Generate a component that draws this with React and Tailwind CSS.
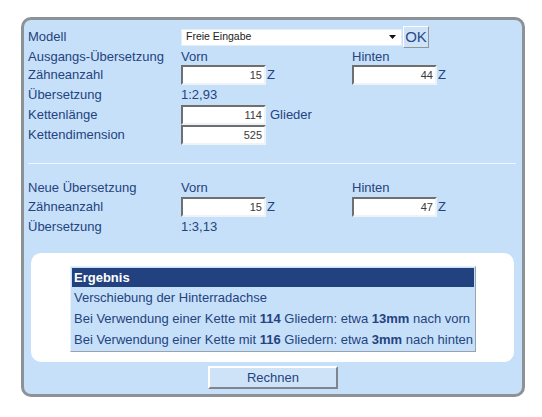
import { useState } from 'react'

function Field({ value, width = 'w-[85px]' }) {
  return (
    <div className={`${width} h-[20px] bg-white border-2 border-t-[#6f6f6f] border-l-[#6f6f6f] border-b-[#eef3f8] border-r-[#eef3f8] flex items-center justify-end pr-[2px] text-[11px] text-[#3a3a3a]`}>
      {value}
    </div>
  )
}

export default function App() {
  const [modell] = useState('Freie Eingabe')
  const txt = 'text-[13px] text-[#24437f]'

  return (
    <div className="w-[542px] h-[417px] bg-white pt-[17px] pl-[21px]" style={{ fontFamily: '"Liberation Sans", Arial, sans-serif' }}>
      <div className="w-[504px] h-[380px] rounded-[10px] border-[3px] border-[#8d9297] bg-[#c7e0f9] pl-[4px] pr-[4px] pt-[6px] flex flex-col">
        <div className={`grid grid-cols-[153px_171px_1fr] ${txt}`}>
          <div className="h-[22px] flex items-center">Modell</div>
          <div className="col-span-2 h-[22px] flex items-center">
            <div className="w-[221px] h-[17px] bg-white border border-[#e4edf6] flex items-center justify-between pl-[4px] pr-[5px] text-[10.5px] text-[#222]">
              <span>{modell}</span>
              <svg width="7" height="4" viewBox="0 0 7 4"><path d="M0 0h7L3.5 4z" fill="#111" /></svg>
            </div>
            <div className="ml-[1px] w-[26px] h-[22px] bg-[#cfe3f8] border border-t-white border-l-white border-b-[#8f959c] border-r-[#8f959c] flex items-center justify-center text-[15px] text-[#2a4a8c]">OK</div>
          </div>

          <div className="h-[17px] flex items-center">Ausgangs-Übersetzung</div>
          <div className="h-[17px] flex items-center">Vorn</div>
          <div className="h-[17px] flex items-center">Hinten</div>

          <div className="h-[20px] flex items-center">Zähneanzahl</div>
          <div className="h-[20px] flex items-center"><Field value="15" /><span className="ml-[1px]">Z</span></div>
          <div className="h-[20px] flex items-center"><Field value="44" /><span className="ml-[1px]">Z</span></div>

          <div className="h-[20px] flex items-center">Übersetzung</div>
          <div className="col-span-2 h-[20px] flex items-center">1:2,93</div>

          <div className="h-[20px] flex items-center">Kettenlänge</div>
          <div className="col-span-2 h-[20px] flex items-center"><Field value="114" /><span className="ml-[4px]">Glieder</span></div>

          <div className="h-[20px] flex items-center">Kettendimension</div>
          <div className="col-span-2 h-[20px] flex items-center"><Field value="525" /></div>
        </div>

        <div className="mt-[18px] mr-[2px] h-px bg-[#eef5fd]" />

        <div className={`mt-[14px] grid grid-cols-[153px_171px_1fr] ${txt}`}>
          <div className="h-[19px] flex items-center">Neue Übersetzung</div>
          <div className="h-[19px] flex items-center">Vorn</div>
          <div className="h-[19px] flex items-center">Hinten</div>

          <div className="h-[20px] flex items-center">Zähneanzahl</div>
          <div className="h-[20px] flex items-center"><Field value="15" /><span className="ml-[1px]">Z</span></div>
          <div className="h-[20px] flex items-center"><Field value="47" /><span className="ml-[1px]">Z</span></div>

          <div className="h-[19px] flex items-center">Übersetzung</div>
          <div className="col-span-2 h-[19px] flex items-center">1:3,13</div>
        </div>

        <div className="mt-[17px] ml-[3px] w-[483px] h-[109px] rounded-[10px] bg-white flex flex-col items-start pl-[39px] pt-[13px]">
          <div className={`w-[406px] bg-[#c7e0f9] border border-t-[#e8f1fb] border-l-[#e8f1fb] border-b-[#9aa3ad] border-r-[#9aa3ad] p-[1px] ${txt}`}>
            <div className="h-[19px] bg-[#22427f] text-white font-bold flex items-center pl-[2px]">Ergebnis</div>
            <div className="h-[21px] flex items-center pl-[2px]">Verschiebung der Hinterradachse</div>
            <div className="h-[21px] flex items-center pl-[2px] whitespace-pre">Bei Verwendung einer Kette mit <b>114</b> Gliedern: etwa <b>13mm</b> nach vorn</div>
            <div className="h-[21px] flex items-center pl-[2px] whitespace-pre">Bei Verwendung einer Kette mit <b>116</b> Gliedern: etwa <b>3mm</b> nach hinten</div>
          </div>
        </div>

        <div className="mt-[4px] flex justify-center">
          <button className="w-[130px] h-[23px] bg-[#cfe3f8] border-2 border-t-white border-l-white border-b-[#7f858c] border-r-[#7f858c] text-[13px] text-[#24437f]">Rechnen</button>
        </div>
      </div>
    </div>
  )
}
